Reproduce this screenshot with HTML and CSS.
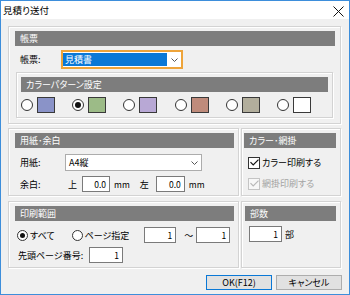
FILE: index.html
```html
<!DOCTYPE html>
<html lang="ja">
<head>
<meta charset="utf-8">
<title>見積り送付</title>
<link rel="stylesheet" href="styles.css">
</head>
<body>
<div class="window">
  <div class="titlebar">
    <span class="title">見積り送付</span>
    <svg class="close" width="11" height="11" viewBox="0 0 11 11"><path d="M0.5 0.5L10.5 10.5M10.5 0.5L0.5 10.5" stroke="#111" stroke-width="1"/></svg>
  </div>
  <div class="body">
    <section class="group g-form">
      <div class="hdr">帳票</div>
      <div class="form-row">
        <span class="lbl">帳票:</span>
        <div class="select focus">
          <span class="sel-hl">見積書</span>
          <svg class="chev" width="7" height="4" viewBox="0 0 7 4"><path d="M0.5 0.5L3.5 3.5L6.5 0.5" fill="none" stroke="#555" stroke-width="1"/></svg>
        </div>
      </div>
      <section class="group inner">
        <div class="hdr">カラーパターン設定</div>
        <div class="swatches">
          <div class="sw"><span class="radio"></span><span class="swatch c1"></span></div>
          <div class="sw"><span class="radio on"></span><span class="swatch c2"></span></div>
          <div class="sw"><span class="radio"></span><span class="swatch c3"></span></div>
          <div class="sw"><span class="radio"></span><span class="swatch c4"></span></div>
          <div class="sw"><span class="radio"></span><span class="swatch c5"></span></div>
          <div class="sw"><span class="radio"></span><span class="swatch c6"></span></div>
        </div>
      </section>
    </section>

    <div class="grid2">
      <section class="group g-paper">
        <div class="hdr">用紙･余白</div>
        <div class="row paper-row">
          <span class="lbl w50">用紙:</span>
          <div class="select plain">
            <span class="sel-text">A4縦</span>
            <svg class="chev" width="7" height="4" viewBox="0 0 7 4"><path d="M0.5 0.5L3.5 3.5L6.5 0.5" fill="none" stroke="#555" stroke-width="1"/></svg>
          </div>
        </div>
        <div class="row margin-row">
          <span class="lbl w53">余白:</span>
          <span class="k">上</span>
          <span class="input w28 ml5">0.0</span>
          <span class="unit ml4">mm</span>
          <span class="k ml10">左</span>
          <span class="input w29 ml7">0.0</span>
          <span class="unit ml4">mm</span>
        </div>
      </section>

      <section class="group g-color">
        <div class="hdr">カラー･網掛</div>
        <div class="row chk-row first">
          <span class="check"><svg width="9" height="7" viewBox="0 0 9 7"><path d="M0.5 3.2L3.2 6L8.5 0.6" fill="none" stroke="#111" stroke-width="1.2"/></svg></span>
          <span>カラー印刷する</span>
        </div>
        <div class="row chk-row dis">
          <span class="check"><svg width="9" height="7" viewBox="0 0 9 7"><path d="M0.5 3.2L3.2 6L8.5 0.6" fill="none" stroke="#b8b8b8" stroke-width="1.2"/></svg></span>
          <span>網掛印刷する</span>
        </div>
      </section>

      <section class="group g-range">
        <div class="hdr">印刷範囲</div>
        <div class="row range-row">
          <span class="radio sm on"></span>
          <span class="ml2">すべて</span>
          <span class="radio sm ml17"></span>
          <span class="ml2">ページ指定</span>
          <span class="input w32 ml15">1</span>
          <span class="tilde ml8">～</span>
          <span class="input w34 ml3">1</span>
        </div>
        <div class="row start-row">
          <span class="lbl2">先頭ページ番号:</span>
          <span class="input w34">1</span>
        </div>
      </section>

      <section class="group g-copies">
        <div class="hdr">部数</div>
        <div class="row copies-row">
          <span class="input w33">1</span>
          <span class="ml3">部</span>
        </div>
      </section>
    </div>

    <div class="buttons">
      <button class="btn default">OK(F12)</button>
      <button class="btn">キャンセル</button>
    </div>
  </div>
</div>
</body>
</html>
```

FILE: styles.css
```css
* { box-sizing: border-box; margin: 0; padding: 0; }
body {
  margin: 0;
  font-family: "Noto Sans CJK JP", "Noto Sans", sans-serif;
  font-size: 9px;
  color: #000;
  background: #fff;
  font-feature-settings: "palt";
}
.window {
  width: 350px;
  height: 295px;
  border: 1px solid #3d8edb;
  background: #f0f0f0;
  display: flex;
  flex-direction: column;
}
.titlebar {
  height: 18px;
  flex: none;
  background: #fff;
  display: flex;
  align-items: center;
  justify-content: space-between;
  padding: 0 5px 0 2px;
}
.title { font-size: 9.5px; line-height: 18px; }
.close { display: block; margin-top: 2px; }
.body {
  padding: 7px 8px 0 7px;
  display: flex;
  flex-direction: column;
}
.group {
  border: 1px solid #d3d3d3;
  box-shadow: inset 1px 1px 0 #fff, 1px 1px 0 #fff;
}
.hdr {
  height: 15px;
  line-height: 15px;
  background: #7d7d7d;
  color: #fff;
  padding-left: 5px;
}
.g-form { height: 98px; padding: 4px 5px 0 6px; }
.form-row { display: flex; align-items: center; margin-top: 4px; height: 19px; }
.lbl { padding-left: 5px; flex: none; }
.form-row .lbl { width: 46px; }
.w50 { width: 50px; }
.w53 { width: 53px; }
.select {
  position: relative;
  display: flex;
  align-items: center;
  background: #fff;
}
.select.focus {
  width: 122px;
  height: 19px;
  border: 2px solid #eea43a;
  padding-left: 0;
}
.sel-hl {
  width: 104px;
  height: 13px;
  line-height: 13px;
  background: #0a78d6;
  color: #fff;
  padding-left: 2px;
}
.chev { position: absolute; right: 3px; top: 50%; margin-top: -2px; }
.select.plain {
  width: 137px;
  height: 17px;
  border: 1px solid #acacac;
}
.sel-text { padding-left: 3px; line-height: 15px; }
.inner {
  margin: 3px 2px 0 1px;
  height: 46px;
  padding: 4px 4px 0 4px;
}
.swatches {
  display: grid;
  grid-template-columns: repeat(6, 1fr);
  margin-top: 5px;
  height: 16px;
}
.sw { display: flex; align-items: center; gap: 4px; }
.radio {
  width: 12px;
  height: 12px;
  border: 1px solid #333;
  border-radius: 50%;
  background: #fff;
  display: inline-flex;
  align-items: center;
  justify-content: center;
  flex: none;
}
.radio.on::after {
  content: "";
  width: 6px;
  height: 6px;
  border-radius: 50%;
  background: #111;
}
.radio.sm { width: 11px; height: 11px; }
.radio.sm.on::after { width: 5px; height: 5px; }
.swatch {
  width: 18px;
  height: 16px;
  border: 1px solid #3a3a3a;
  flex: none;
}
.c1 { background: #8a93c8; }
.c2 { background: #9cbb87; }
.c3 { background: #b8a8d5; }
.c4 { background: #bf8b7b; }
.c5 { background: #b2ae9c; }
.c6 { background: #fff; }

.grid2 {
  display: grid;
  grid-template-columns: 231px 100px;
  grid-template-rows: 68px 67px;
  gap: 5px 2px;
  margin-top: 4px;
}
.row { display: flex; align-items: center; }
.g-paper { padding: 4px 4px 0 6px; }
.paper-row { margin-top: 6px; height: 17px; }
.margin-row { margin-top: 5px; height: 16px; }
.input {
  height: 16px;
  line-height: 14px;
  border: 1px solid #7a7a7a;
  background: #fff;
  text-align: right;
  padding-right: 3px;
  font-size: 8.5px;
  flex: none;
}
.w28 { width: 28px; }
.w29 { width: 29px; }
.w32 { width: 32px; }
.w33 { width: 33px; }
.w34 { width: 34px; }
.ml2 { margin-left: 2px; }
.ml3 { margin-left: 3px; }
.ml4 { margin-left: 4px; }
.ml5 { margin-left: 5px; }
.ml7 { margin-left: 7px; }
.ml8 { margin-left: 8px; }
.ml10 { margin-left: 10px; }
.ml15 { margin-left: 15px; }
.ml17 { margin-left: 17px; }
.unit { font-size: 8.5px; }

.g-color { padding: 4px 4px 0 2px; }
.chk-row { padding-left: 4px; height: 13px; gap: 2px; }
.chk-row.first { margin-top: 8px; }
.chk-row.dis { margin-top: 8px; color: #a3a3a3; }
.check {
  width: 12px;
  height: 12px;
  border: 1px solid #333;
  background: #fff;
  display: inline-flex;
  align-items: center;
  justify-content: center;
  flex: none;
}
.dis .check { border-color: #c4c4c4; background: #f7f7f7; }

.g-range { padding: 4px 4px 0 6px; }
.range-row { margin-top: 6px; height: 16px; padding-left: 2px; }
.start-row { margin-top: 4px; height: 16px; padding-left: 3px; }
.lbl2 { width: 71px; flex: none; }
.tilde { width: 9px; }

.g-copies { padding: 4px 4px 0 3px; }
.copies-row { margin-top: 5px; height: 16px; padding-left: 4px; }

.buttons {
  display: flex;
  justify-content: flex-end;
  gap: 4px;
  margin-top: 7px;
  margin-right: -1px;
}
.btn {
  width: 66px;
  height: 15px;
  border: 1px solid #adadad;
  background: #e1e1e1;
  font-family: "Noto Sans CJK JP", "Noto Sans", sans-serif;
  font-size: 9px;
  line-height: 13px;
  color: #000;
  font-feature-settings: "palt";
}
.btn.default { border-color: #0a78d6; }
```
